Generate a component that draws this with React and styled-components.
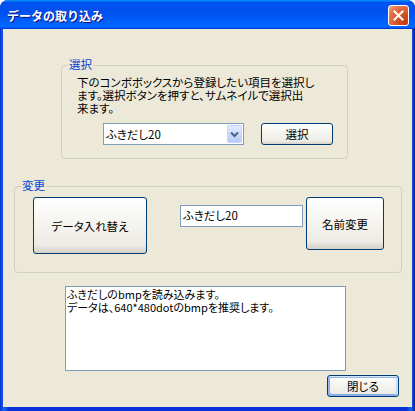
import React from "react";
import styled, { createGlobalStyle } from "styled-components";

const GlobalStyle = createGlobalStyle`
  html, body {
    margin: 0;
    padding: 0;
    background: #ffffff;
  }
  body {
    font-family: "Noto Sans CJK JP", "Noto Sans", sans-serif;
    font-size: 11.5px;
    color: #000;
  }
`;

const Window = styled.div`
  display: flex;
  flex-direction: column;
  width: 415px;
  height: 411px;
  box-sizing: border-box;
  border-radius: 8px 8px 0 0;
  overflow: hidden;
  background: linear-gradient(90deg, #0831d9 0%, #166aee 1%, #0831d9 2%, #0831d9 98%, #166aee 99%, #001ea0 100%);
`;

const TitleBar = styled.div`
  display: flex;
  align-items: center;
  justify-content: space-between;
  height: 29px;
  flex: none;
  box-sizing: border-box;
  padding: 2px 6px 0 7px;
  background: linear-gradient(
    180deg,
    #0997ff,
    #0053ee 8%,
    #0050ee 40%,
    #0066ff 88%,
    #0066ff 93%,
    #005bff 95%,
    #003dd7 96%,
    #003dd7
  );
`;

const Title = styled.span`
  color: #fff;
  font-weight: 700;
  font-size: 12px;
  line-height: 14px;
  text-shadow: 1px 1px #0f1089;
`;

const CloseButton = styled.div`
  display: flex;
  align-items: center;
  justify-content: center;
  width: 21px;
  height: 21px;
  box-sizing: border-box;
  border: 1px solid #fff;
  border-radius: 3px;
  background: radial-gradient(circle at 85% 85%, #c43a0c 0%, #d8582a 45%, #e47850 75%, #f2b39a 100%);
`;

const Body = styled.div`
  flex: 1;
  display: flex;
  flex-direction: column;
  align-items: flex-start;
  margin: 0 3px 4px 3px;
  background: #ece9d8;
`;

const Group = styled.div`
  position: relative;
  box-sizing: border-box;
  width: ${(p) => p.$width}px;
  margin: ${(p) => p.$top}px 0 0 ${(p) => p.$left}px;
  padding: ${(p) => p.$pad};
  border: 1px solid #d0d0bf;
  border-radius: 4px;
`;

const GroupLabel = styled.span`
  position: absolute;
  top: -8px;
  left: 6px;
  padding: 0 1px;
  background: #ece9d8;
  color: #0046d5;
  line-height: 13px;
`;

const Desc = styled.p`
  margin: 0;
  line-height: 13px;
  white-space: nowrap;
  font-feature-settings: "palt";
`;

const Row = styled.div`
  display: flex;
  align-items: flex-start;
  margin-top: ${(p) => p.$top || 0}px;
  padding-left: ${(p) => p.$indent || 0}px;
`;

const Combo = styled.div`
  display: flex;
  align-items: stretch;
  width: 141px;
  height: 22px;
  box-sizing: border-box;
  border: 1px solid #7f9db9;
  background: #fff;
  padding: 1px;
`;

const ComboText = styled.span`
  flex: 1;
  line-height: 18px;
  padding-left: 1px;
  font-feature-settings: "palt";
`;

const DropButton = styled.div`
  display: flex;
  align-items: center;
  justify-content: center;
  width: 15px;
  box-sizing: border-box;
  border: 1px solid #c3d3fd;
  border-radius: 2px;
  background: linear-gradient(180deg, #e3ecfe 0%, #c9d9fd 50%, #b6cbf8 100%);
`;

const Button = styled.button`
  display: flex;
  align-items: center;
  justify-content: center;
  width: ${(p) => p.$w}px;
  height: ${(p) => p.$h}px;
  margin-left: ${(p) => p.$left || 0}px;
  padding: 0;
  box-sizing: border-box;
  border: 1px solid #003c74;
  border-radius: 3px;
  background: linear-gradient(180deg, #ffffff 0%, #f4f3ee 50%, #ecebe6 86%, #d6d0c5 100%);
  font-family: inherit;
  font-size: 11.5px;
  color: #000;
  font-feature-settings: "palt";
  box-shadow: ${(p) =>
    p.$default
      ? "inset -1px 1px #cee7ff, inset 1px 2px #98b8ea, inset -2px 2px #bcd4f6, inset 1px -1px #89ade4, inset 2px -2px #89ade4"
      : "none"};
`;

const TextField = styled.div`
  width: 123px;
  height: 22px;
  margin: 8px 0 0 ${(p) => p.$left}px;
  box-sizing: border-box;
  border: 1px solid #7f9db9;
  background: #fff;
  padding: 0 2px;
  line-height: 18px;
  font-feature-settings: "palt";
`;

const Memo = styled.div`
  width: 281px;
  height: 85px;
  margin: 13px 0 0 62px;
  box-sizing: border-box;
  border: 1px solid #7f9db9;
  background: #fff;
  padding: 1px 1px;
  font-size: 11px;
  line-height: 13px;
  font-feature-settings: "palt";
`;

const Footer = styled.div`
  margin: 4px 0 0 324px;
`;

export default function App() {
  return (
    <>
      <GlobalStyle />
      <Window>
        <TitleBar>
          <Title>データの取り込み</Title>
          <CloseButton>
            <svg width="11" height="11" viewBox="0 0 11 11">
              <path d="M1.5 1.5 L9.5 9.5 M9.5 1.5 L1.5 9.5" stroke="#fff" strokeWidth="2" strokeLinecap="square" />
            </svg>
          </CloseButton>
        </TitleBar>
        <Body>
          <Group $width={287} $top={36} $left={58} $pad="10px 0 13px 15px">
            <GroupLabel>選択</GroupLabel>
            <Desc>
              下のコンボボックスから登録したい項目を選択し
              <br />
              ます。選択ボタンを押すと、サムネイルで選択出
              <br />
              来ます。
            </Desc>
            <Row $top={8} $indent={26}>
              <Combo>
                <ComboText>ふきだし20</ComboText>
                <DropButton>
                  <svg width="9" height="7" viewBox="0 0 9 7">
                    <path d="M1 1.5 L4.5 5 L8 1.5" fill="none" stroke="#4d6185" strokeWidth="2" />
                  </svg>
                </DropButton>
              </Combo>
              <Button $w={72} $h={22} $left={17}>選択</Button>
            </Row>
          </Group>
          <Group $width={388} $top={27} $left={11} $pad="10px 0 18px 18px">
            <GroupLabel>変更</GroupLabel>
            <Row>
              <Button $w={114} $h={57}>データ入れ替え</Button>
              <TextField $left={33}>ふきだし20</TextField>
              <Button $w={78} $h={53} $left={3}>名前変更</Button>
            </Row>
          </Group>
          <Memo>
            ふきだしのbmpを読み込みます。
            <br />
            データは、640*480dotのbmpを推奨します。
          </Memo>
          <Footer>
            <Button $w={72} $h={22} $default>閉じる</Button>
          </Footer>
        </Body>
      </Window>
    </>
  );
}
